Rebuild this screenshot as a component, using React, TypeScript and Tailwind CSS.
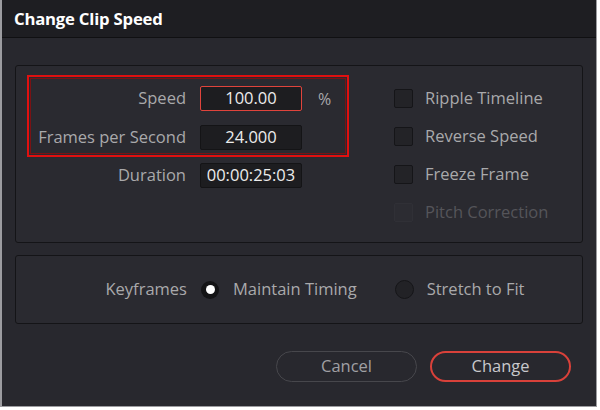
export default function App() {
  const checks = [
    { label: 'Ripple Timeline', disabled: false },
    { label: 'Reverse Speed', disabled: false },
    { label: 'Freeze Frame', disabled: false },
    { label: 'Pitch Correction', disabled: true },
  ];

  return (
    <div className="w-[600px] h-[410px] bg-white" style={{ fontFamily: '"Open Sans", sans-serif' }}>
      <div className="w-[597px] h-[407px] bg-[#28282e] border-l-2 border-r border-b border-[#9c9ca0] flex flex-col">
        {/* Title */}
        <div className="h-[38px] bg-[#1e1e22] border-b border-[#101012] flex items-center pl-[12px]">
          <span className="text-[16.7px] font-bold text-white tracking-[-0.2px]">Change Clip Speed</span>
        </div>

        {/* Speed panel */}
        <div className="mx-[13px] mt-[27px] h-[178px] bg-[#2a2a30] border border-[#141417] rounded-[3px] flex">
          <div className="w-[370px] pt-[9px] pl-[11px]">
            <div className="w-[322px] h-[82px] border-2 border-[#e01010] p-px">
              <div className="h-full border border-[#7a1214] flex flex-col pt-[7px] gap-[14px]">
                <div className="flex items-center">
                  <span className="w-[155px] text-right text-[16.5px] text-[#a9a9ab]">Speed</span>
                  <div className="ml-[14px] w-[102px] h-[25px] bg-[#1d1d20] border border-[#e0443c] rounded-[2px] flex items-center justify-center text-[16.5px] text-[#ececec]">100.00</div>
                  <span className="ml-[16px] text-[16px] text-[#a9a9ab]">%</span>
                </div>
                <div className="flex items-center">
                  <span className="w-[155px] text-right text-[16.5px] text-[#a9a9ab] whitespace-nowrap">Frames per Second</span>
                  <div className="ml-[14px] w-[102px] h-[25px] bg-[#1d1d20] border border-[#141416] rounded-[2px] flex items-center justify-center text-[16.5px] text-[#ececec]">24.000</div>
                </div>
              </div>
            </div>
            <div className="flex items-center mt-[6px] pl-[4px]">
              <span className="w-[155px] text-right text-[16.5px] text-[#a9a9ab]">Duration</span>
              <div className="ml-[14px] w-[102px] h-[25px] bg-[#1d1d20] border border-[#141416] rounded-[2px] flex items-center justify-center text-[16.5px] text-[#ececec]">00:00:25:03</div>
            </div>
          </div>
          <div className="flex flex-col pt-[22px] pl-[8px] gap-[17px]">
            {checks.map((c) => (
              <div key={c.label} className="flex items-center h-[21px]">
                <div className={`w-[19px] h-[19px] rounded-[2px] border ${c.disabled ? 'bg-[#2c2c32] border-[#303036]' : 'bg-[#232327] border-[#151518]'}`} />
                <span className={`ml-[12px] text-[16.5px] ${c.disabled ? 'text-[#55555a]' : 'text-[#a9a9ab]'}`}>{c.label}</span>
              </div>
            ))}
          </div>
        </div>

        {/* Keyframes panel */}
        <div className="mx-[13px] mt-[12px] h-[69px] bg-[#2a2a30] border border-[#141417] rounded-[3px] flex items-center">
          <span className="w-[171px] text-right text-[16.5px] text-[#a9a9ab]">Keyframes</span>
          <div className="ml-[14px] w-[18px] h-[18px] rounded-full bg-[#141416] flex items-center justify-center">
            <div className="w-[9px] h-[9px] rounded-full bg-white" />
          </div>
          <span className="ml-[14px] text-[16.5px] text-[#a9a9ab]">Maintain Timing</span>
          <div className="ml-[38px] w-[19px] h-[19px] rounded-full bg-[#222226] border border-[#151518]" />
          <span className="ml-[13px] text-[16.5px] text-[#a9a9ab]">Stretch to Fit</span>
        </div>

        {/* Buttons */}
        <div className="flex justify-end gap-[13px] mt-[27px] pr-[25px]">
          <button className="w-[141px] h-[31px] rounded-full border border-[#47474c] text-[16.5px] text-[#a0a0a4]">Cancel</button>
          <button className="w-[141px] h-[31px] rounded-full border-2 border-[#d9413a] text-[16.5px] text-[#c8c8cc]">Change</button>
        </div>
      </div>
    </div>
  );
}
